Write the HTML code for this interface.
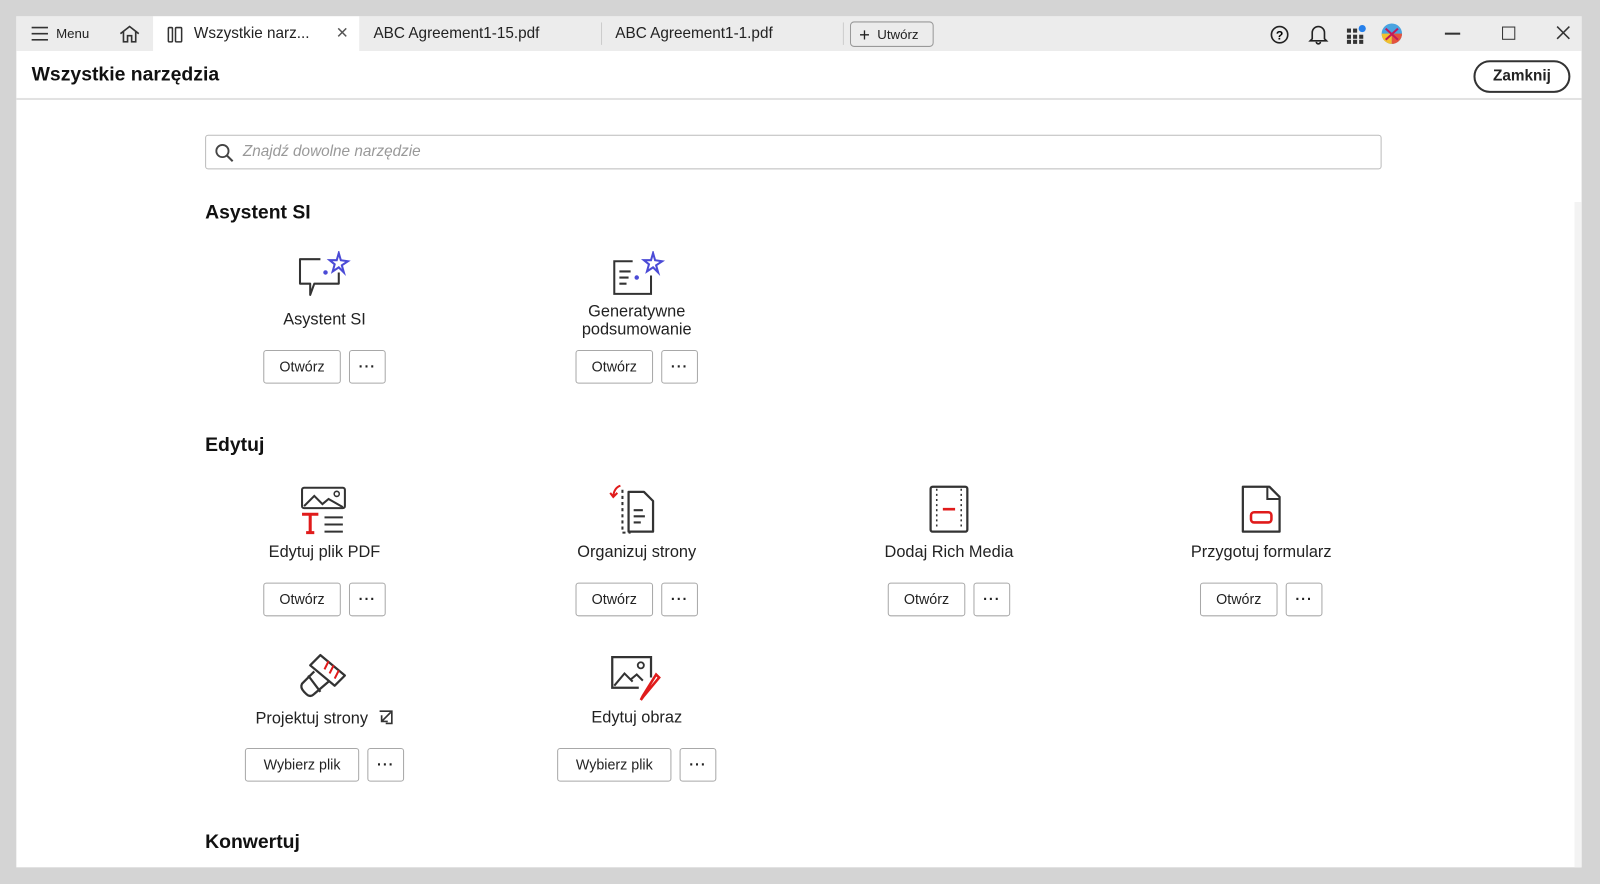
<!DOCTYPE html>
<html><head><meta charset="utf-8"><style>
*{box-sizing:border-box;margin:0;padding:0}
body{width:1600px;height:884px;background:#d4d4d4;font-family:"Liberation Sans",sans-serif;color:#222;position:relative;overflow:hidden}
.wrap{position:absolute;left:0;top:0;width:1568px;height:866px;transform:scale(1.0204);transform-origin:0 0}
.win{position:absolute;left:16px;top:16px;width:1534px;height:834px;background:#fff}
.tabbar{position:absolute;left:0;top:0;width:1534px;height:34px;background:#ececec}
.t{position:absolute;top:0;height:34px;line-height:34px;font-size:15px;color:#222}
.hdr{position:absolute;left:0;top:34px;width:1534px;height:48px;border-bottom:2px solid #e2e2e2}
.a{position:absolute}
.sec{position:absolute;left:185px;font-size:19px;font-weight:bold;color:#111}
.tool{position:absolute;width:240px;text-align:center}
.tool .lbl{font-size:16px;color:#222;line-height:18px}
.btn{position:absolute;height:33px;border:1px solid #a8a8a8;border-radius:3px;background:#fff;font-size:14px;line-height:31px;text-align:center;color:#222}
.d{font-weight:bold;letter-spacing:1px}
</style></head><body>
<div class="wrap">
<div class="win">
 <div class="tabbar">
  <svg class="a" style="left:14px;top:10px" width="18" height="14"><path d="M1 1H17M1 7H17M1 13H17" stroke="#333" stroke-width="1.6"/></svg>
  <div class="t" style="left:39px;font-size:13px">Menu</div>
  <svg class="a" style="left:100px;top:8px" width="22" height="18"><path d="M2 9L11 2L20 9M5 7V17H9V11H13V17H17V7" fill="none" stroke="#333" stroke-width="1.6"/></svg>
  <div class="a" style="left:134px;top:0;width:202px;height:34px;background:#fff"></div>
  <svg class="a" style="left:148px;top:9px" width="16" height="17"><rect x="1" y="2" width="4" height="14" rx="1" fill="none" stroke="#333" stroke-width="1.5"/><rect x="8" y="2" width="6" height="14" rx="1" fill="none" stroke="#333" stroke-width="1.5"/></svg>
  <div class="t" style="left:174px">Wszystkie narz...</div>
  <div class="t" style="left:313px;color:#555">✕</div>
  <div class="t" style="left:350px">ABC Agreement1-15.pdf</div>
  <div class="a" style="left:573px;top:6px;width:1px;height:22px;background:#ccc"></div>
  <div class="t" style="left:587px">ABC Agreement1-1.pdf</div>
  <div class="a" style="left:810px;top:6px;width:1px;height:22px;background:#ccc"></div>
  <div class="a" style="left:817px;top:5px;width:82px;height:25px;border:1px solid #999;border-radius:4px;font-size:13px;line-height:23px;padding-left:8px"><span style="font-size:18px;vertical-align:-2px">+</span>&nbsp; Utwórz</div>
  <svg class="a" style="left:1228px;top:8px" width="20" height="20"><circle cx="10" cy="10" r="8" fill="none" stroke="#222" stroke-width="1.6"/><text x="10" y="14.5" font-size="12" font-weight="bold" text-anchor="middle" font-family="Liberation Sans">?</text></svg>
  <svg class="a" style="left:1266px;top:7px" width="20" height="21"><path d="M4 15V9a6 6 0 0 1 12 0v6l2 2H2zM8 18a2 2 0 0 0 4 0" fill="none" stroke="#222" stroke-width="1.6"/></svg>
  <svg class="a" style="left:1302px;top:8px" width="22" height="20"><g fill="#333"><rect x="2" y="4" width="4" height="4"/><rect x="8" y="4" width="4" height="4"/><rect x="2" y="10" width="4" height="4"/><rect x="8" y="10" width="4" height="4"/><rect x="14" y="10" width="4" height="4"/><rect x="2" y="15" width="4" height="4"/><rect x="8" y="15" width="4" height="4"/><rect x="14" y="15" width="4" height="4"/></g><circle cx="17" cy="4" r="3.5" fill="#2680eb"/></svg>
  <svg class="a" style="left:1337px;top:6px" width="22" height="22"><circle cx="11" cy="11" r="10" fill="#4aa3e0"/><path d="M11 11L1 11A10 10 0 0 0 11 21z" fill="#f2c12e"/><path d="M11 11V21A10 10 0 0 0 21 11z" fill="#e5533d"/><path d="M5 6L17 17M17 6L5 17" stroke="#c2185b" stroke-width="2"/></svg>
  <div class="a" style="left:1400px;top:16px;width:15px;height:1.5px;background:#333"></div>
  <div class="a" style="left:1456px;top:10px;width:13px;height:13px;border:1.5px solid #333"></div>
  <svg class="a" style="left:1509px;top:9px" width="14" height="14"><path d="M1 1L13 13M13 1L1 13" stroke="#333" stroke-width="1.5"/></svg>
 </div>
 <div class="hdr">
  <div class="a" style="left:15px;top:13px;font-size:19px;font-weight:bold;color:#111">Wszystkie narzędzia</div>
  <div class="a" style="left:1428px;top:9px;width:95px;height:32px;border:2px solid #333;border-radius:16px;text-align:center;line-height:28px;font-size:15px;font-weight:bold">Zamknij</div>
 </div>
 <div class="a" style="left:1527px;top:182px;width:7px;height:652px;background:#f3f3f3"></div>
 <div class="a" style="left:185px;top:116px;width:1153px;height:34px;border:1px solid #bbb;border-radius:3px">
  <svg class="a" style="left:8px;top:7px" width="20" height="20"><circle cx="8" cy="8" r="6" fill="none" stroke="#444" stroke-width="1.8"/><path d="M12.5 12.5L18 18" stroke="#444" stroke-width="2"/></svg>
  <div class="a" style="left:36px;top:7px;font-size:15px;font-style:italic;color:#999">Znajdź dowolne narzędzie</div>
 </div>
 <div class="sec" style="top:182px">Asystent SI</div>
 <div class="sec" style="top:410px">Edytuj</div>
 <div class="sec" style="top:799px">Konwertuj</div>

 <svg class="a" style="left:276px;top:230px" width="54" height="50"><path d="M5 8H22M40 21V32H16L12 43V32H2V8H5" fill="none" stroke="#333" stroke-width="2" stroke-linejoin="round"/><path d="M40 2L42 9L49 10L43 14L45 21L40 16L34 20L36 13L31 9L38 9Z" fill="none" stroke="#4b4bd6" stroke-width="2"/><circle cx="27" cy="21" r="2.2" fill="#4b4bd6"/></svg>
 <div class="tool" style="left:182px;top:289px"><div class="lbl">Asystent SI</div></div>
 <div class="btn" style="left:242px;top:327px;width:76px">Otwórz</div><div class="btn d" style="left:326px;top:327px;width:36px">···</div>

 <svg class="a" style="left:582px;top:230px" width="54" height="46"><path d="M22 10H4V42H40V24" fill="none" stroke="#333" stroke-width="2"/><path d="M9 20H20M9 26H18M9 32H16" stroke="#333" stroke-width="2"/><path d="M42 2L44 9L51 10L45 14L47 21L42 16L36 20L38 13L33 9L40 9Z" fill="none" stroke="#4b4bd6" stroke-width="2"/><circle cx="26" cy="26" r="2.2" fill="#4b4bd6"/></svg>
 <div class="tool" style="left:488px;top:281px"><div class="lbl">Generatywne<br>podsumowanie</div></div>
 <div class="btn" style="left:548px;top:327px;width:76px">Otwórz</div><div class="btn d" style="left:632px;top:327px;width:36px">···</div>

 <svg class="a" style="left:278px;top:460px" width="48" height="48"><rect x="2" y="2" width="42" height="20" rx="2" fill="none" stroke="#333" stroke-width="2"/><path d="M4 20L14 10L22 18L28 13L42 21" fill="none" stroke="#333" stroke-width="2"/><circle cx="36" cy="8" r="2.5" fill="none" stroke="#333" stroke-width="1.5"/><path d="M2 28H18M10 28V46M6 46H14" stroke="#e01b1b" stroke-width="3"/><path d="M24 31H42M24 38H42M24 45H42" stroke="#333" stroke-width="2"/></svg>
 <div class="tool" style="left:182px;top:517px"><div class="lbl">Edytuj plik PDF</div></div>
 <div class="btn" style="left:242px;top:555px;width:76px">Otwórz</div><div class="btn d" style="left:326px;top:555px;width:36px">···</div>

 <svg class="a" style="left:580px;top:458px" width="58" height="50"><path d="M14 6V48M14 48H22" fill="none" stroke="#333" stroke-width="2" stroke-dasharray="3 3"/><path d="M20 8H35L44 17V47H20Z" fill="none" stroke="#333" stroke-width="2.2" stroke-linejoin="round"/><path d="M25 26H34M25 32H36M25 38H32" stroke="#333" stroke-width="2"/><path d="M12 2Q6 4 5 12M2 9L5 13L9 9" fill="none" stroke="#e01b1b" stroke-width="2"/></svg>
 <div class="tool" style="left:488px;top:517px"><div class="lbl">Organizuj strony</div></div>
 <div class="btn" style="left:548px;top:555px;width:76px">Otwórz</div><div class="btn d" style="left:632px;top:555px;width:36px">···</div>

 <svg class="a" style="left:892px;top:458px" width="44" height="50"><rect x="4" y="3" width="36" height="44" rx="2" fill="none" stroke="#333" stroke-width="2.2"/><path d="M10 5V45M34 5V45" stroke="#333" stroke-width="1.5" stroke-dasharray="2 3"/><path d="M16 25H28" stroke="#e01b1b" stroke-width="2.5"/></svg>
 <div class="tool" style="left:794px;top:517px"><div class="lbl">Dodaj Rich Media</div></div>
 <div class="btn" style="left:854px;top:555px;width:76px">Otwórz</div><div class="btn d" style="left:938px;top:555px;width:36px">···</div>

 <svg class="a" style="left:1198px;top:458px" width="44" height="50"><path d="M4 3H30L40 13V47H4Z" fill="none" stroke="#333" stroke-width="2.2" stroke-linejoin="round"/><path d="M28 3V15H40" fill="none" stroke="#333" stroke-width="2"/><rect x="12" y="28" width="20" height="10" rx="3" fill="none" stroke="#e01b1b" stroke-width="2.5"/></svg>
 <div class="tool" style="left:1100px;top:517px"><div class="lbl">Przygotuj formularz</div></div>
 <div class="btn" style="left:1160px;top:555px;width:76px">Otwórz</div><div class="btn d" style="left:1244px;top:555px;width:36px">···</div>

 <svg class="a" style="left:276px;top:622px" width="52" height="48"><path d="M22 4L46 24L36 34L12 14Z" fill="none" stroke="#333" stroke-width="2.2" stroke-linejoin="round"/><path d="M30 10L26 18M35 14L31 22M40 19L36 27" stroke="#e01b1b" stroke-width="2"/><path d="M16 20L4 32Q2 36 6 40L8 42Q12 46 16 42L30 30M10 24L22 40" fill="none" stroke="#333" stroke-width="2.2"/></svg>
 <div class="tool" style="left:182px;top:679px"><div class="lbl">Projektuj strony &nbsp;<svg width="16" height="16" style="vertical-align:-2px"><path d="M2 2H14V14H8M13 3L4 12M4 6V12H10" fill="none" stroke="#333" stroke-width="1.6"/></svg></div></div>
 <div class="btn" style="left:224px;top:717px;width:112px">Wybierz plik</div><div class="btn d" style="left:344px;top:717px;width:36px">···</div>

 <svg class="a" style="left:582px;top:626px" width="54" height="46"><path d="M40 22V2H2V32H28" fill="none" stroke="#333" stroke-width="2.2"/><path d="M4 30L14 18L22 26M20 24L26 19L32 25" fill="none" stroke="#333" stroke-width="2"/><circle cx="30" cy="10" r="3" fill="none" stroke="#333" stroke-width="1.8"/><path d="M48 22L33 40L30 44L32 40L45 19Z" fill="none" stroke="#e01b1b" stroke-width="2.5"/></svg>
 <div class="tool" style="left:488px;top:679px"><div class="lbl">Edytuj obraz</div></div>
 <div class="btn" style="left:530px;top:717px;width:112px">Wybierz plik</div><div class="btn d" style="left:650px;top:717px;width:36px">···</div>
</div>
</div>
</body></html>
